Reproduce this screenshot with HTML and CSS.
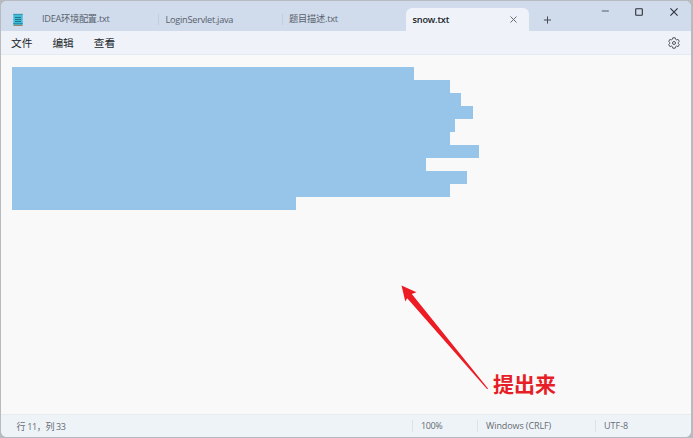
FILE: index.html
```
<!DOCTYPE html>
<html lang="zh-CN">
<head>
<meta charset="utf-8">
<title>snow.txt</title>
<link rel="stylesheet" href="styles.css">
</head>
<body>
<div class="window">
  <header class="titlebar">
    <svg class="app-icon" width="10" height="13" viewBox="0 0 10 13">
      <rect x="0.3" y="1" width="9.4" height="11.500" rx="0.7" fill="#42bdd8"/>
      <path d="M.5 1.300h9" stroke="#267b98" stroke-width="1.200" stroke-dasharray="1 1"/>
      <path d="M2 4.500h6M2 6.500h6M2 8.500h6" stroke="#20718b"/>
      <path d="M.3 10.600h9.400" stroke="#1b91b2"/>
      <path d="M.5 12.300h9" stroke="#a1744d"/>
    </svg>
    <div class="tab first"><span class="t-idea">IDEA环境配置.txt</span></div>
    <div class="tab"><span class="t-login">LoginServlet.java</span></div>
    <div class="tab"><span class="t-desc">题目描述.txt</span></div>
    <div class="tab active"><span class="t-snow">snow.txt</span>
      <svg width="7" height="7" viewBox="0 0 7 7"><path d="M.5.5l6 6M6.5.5l-6 6" stroke="#666b72" fill="none"/></svg>
    </div>
    <svg class="add" width="8" height="8" viewBox="0 0 8 8"><path d="M4.500 .4v7.200M.9 4h7.100" stroke="#474d56" fill="none"/></svg>
    <div class="controls">
      <svg width="8" height="8" viewBox="0 0 8 8"><path d="M.8 3h7" stroke="#555b65"/></svg>
      <svg width="8" height="8" viewBox="0 0 8 8"><rect x=".7" y=".7" width="6.6" height="6.6" rx=".5" stroke="#2b3038" stroke-width="1.100" fill="none"/></svg>
      <svg width="8" height="8" viewBox="0 0 8 8"><path d="M.4.4l7.200 7.200M7.600.4L.4 7.600" stroke="#2b3038" stroke-width="1.100"/></svg>
    </div>
  </header>
  <nav class="menu">
    <span>文件</span><span>编辑</span><span>查看</span>
    <svg class="gear" width="12" height="12" viewBox="0 0 12 12" fill="none" stroke="#50555b" stroke-linejoin="round">
      <path d="M4.800.8h2.400l.4 1.500 1 .6 1.500-.5 1.200 2.100L10.200 5.500v1l1.100 1-1.200 2.100-1.500-.5-1 .6-.4 1.500H4.800l-.4-1.500-1-.6-1.500.5L.7 7.500l1.100-1v-1l-1.100-1 1.200-2.100 1.500.5 1-.6z"/>
      <circle cx="6" cy="6" r="1.500"/>
    </svg>
  </nav>
  <main class="editor">
    <div class="selection">
      <i class="w1"></i><i class="w2"></i><i class="w3"></i><i class="w4"></i><i class="w5"></i><i class="w2"></i><i class="w6"></i><i class="w7"></i><i class="w8"></i><i class="w2"></i><i class="w9"></i>
    </div>
    <svg class="arrow" width="90" height="106" viewBox="0 0 90 106"><path d="M.5.5L15.500 7.300l-4.700 1.800L87 103.600l-.8.600L6.200 13.200 4.300 16.500z" fill="#ed1c24"/></svg>
    <span class="note">提出来</span>
  </main>
  <footer class="status">
    <div class="position">行 11，列 33</div>
    <div class="cell zoom">100%</div>
    <div class="cell eol">Windows (CRLF)</div>
    <div class="cell enc">UTF-8</div>
  </footer>
</div>
</body>
</html>
```
FILE: styles.css
```
* { box-sizing: border-box; }
body {
  margin: 0;
  width: 693px;
  height: 438px;
  padding: 1px;
  overflow: hidden;
  background: #b7babf;
  font-family: "Open Sans", "Noto Sans CJK SC", sans-serif;
}
svg { display: block; flex: none; }
.window {
  position: relative;
  width: 690px;
  height: 436px;
  display: flex;
  flex-direction: column;
  overflow: hidden;
  border-radius: 6px;
  background: #f9f9f9;
}
.titlebar {
  height: 30px;
  flex: none;
  display: flex;
  align-items: flex-end;
  background: #d0dbeb;
  font-size: 9.2px;
  color: #59616d;
}
.app-icon { margin: 0 0 5px 12px; }
.tab {
  width: 123.5px;
  height: 23px;
  flex: none;
  padding-left: 6px;
  display: flex;
  align-items: center;
  position: relative;
  white-space: nowrap;
}
.tab span { line-height: 14px; }
.t-idea { letter-spacing: -0.27px; padding-bottom: 1px; }
.t-login { letter-spacing: -0.26px; padding-left: .5px; }
.t-desc { letter-spacing: -0.2px; padding: 0 0 1px .5px; }
.t-snow { letter-spacing: -0.2px; padding-left: .5px; }
.tab.first { width: 136px; padding-left: 19px; }
.tab:not(.active):not(:nth-child(4))::after {
  content: "";
  position: absolute;
  right: 0;
  top: 6px;
  width: 1px;
  height: 11px;
  background: #c3cddb;
}
.tab.active {
  width: 123px;
  padding: 0 12px 0 6px;
  justify-content: space-between;
  border-radius: 6px 6px 0 0;
  background: #eff3f9;
  color: #20242a;
  font-weight: 600;
}
.add { margin: 0 0 7px 14px; }
.controls {
  display: flex;
  gap: 26.500px;
  margin: 0 13.5px 15px auto;
}
.menu {
  height: 24px;
  flex: none;
  display: flex;
  align-items: center;
  gap: 20px;
  padding: 0 11px 0 10px;
  border-bottom: 1px solid #e4eaf0;
  background: #eff3f9;
  font-size: 10.700px;
  color: #22262b;
}
.gear { margin-left: auto; }
.editor { flex: 1; padding: 12px 11px; }
.selection i {
  display: block;
  height: 13px;
  background: #97c5e9;
}
.selection .w1 { width: 402px; }
.selection .w2 { width: 438px; }
.selection .w3 { width: 449.400px; }
.selection .w4 { width: 461.400px; }
.selection .w5 { width: 443.400px; }
.selection .w6 { width: 467.400px; }
.selection .w7 { width: 414px; }
.selection .w8 { width: 455.400px; }
.selection .w9 { width: 284px; }
.arrow { position: absolute; left: 400px; top: 284px; }
.note {
  position: absolute;
  left: 492px;
  top: 367px;
  font: bold 21px/30px "Noto Sans CJK SC", sans-serif;
  color: #e51e27;
}
.status {
  height: 23px;
  flex: none;
  display: flex;
  align-items: center;
  border-top: 1px solid #e7ebee;
  background: #eef3f8;
  font-size: 9px;
  color: #666b72;
  white-space: nowrap;
}
.position { width: 411px; padding-left: 15.5px; letter-spacing: -0.35px; }
.cell {
  height: 12px;
  line-height: 12px;
  padding-left: 8px;
  border-left: 1px solid #dde2e7;
}
.zoom { width: 65px; letter-spacing: -0.4px; }
.eol { width: 118px; letter-spacing: -0.1px; }
```
